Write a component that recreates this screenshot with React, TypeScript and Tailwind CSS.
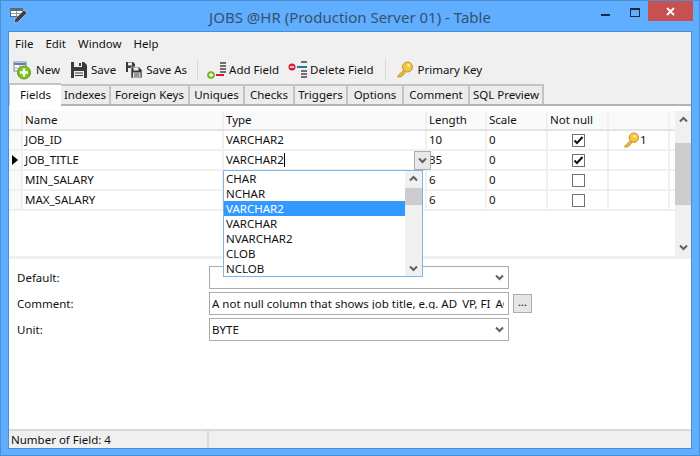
import React from 'react';

const font = { fontFamily: '"Noto Sans", "Open Sans", sans-serif' };

const tabs = [
  { label: 'Indexes', w: 'w-[50px]' },
  { label: 'Foreign Keys', w: 'w-[79px]' },
  { label: 'Uniques', w: 'w-[55px]' },
  { label: 'Checks', w: 'w-[50px]' },
  { label: 'Triggers', w: 'w-[53px]' },
  { label: 'Options', w: 'w-[56px]' },
  { label: 'Comment', w: 'w-[66px]' },
  { label: 'SQL Preview', w: 'w-[74px]' },
];

const rows = [
  { name: 'JOB_ID', type: 'VARCHAR2', length: '10', scale: '0', notNull: true, key: true },
  { name: 'JOB_TITLE', type: 'VARCHAR2', length: '35', scale: '0', notNull: true, current: true },
  { name: 'MIN_SALARY', type: '', length: '6', scale: '0', notNull: false },
  { name: 'MAX_SALARY', type: '', length: '6', scale: '0', notNull: false },
];

const types = ['CHAR', 'NCHAR', 'VARCHAR2', 'VARCHAR', 'NVARCHAR2', 'CLOB', 'NCLOB'];

function Chevron({ dir = 'down', className = '' }: { dir?: 'down' | 'up'; className?: string }) {
  return (
    <svg width="9" height="7" viewBox="0 0 9 7" className={className}>
      <path d={dir === 'down' ? 'M1 1.5l3.5 3.5L8 1.5' : 'M1 5.5L4.5 2 8 5.5'} fill="none" stroke="#606060" strokeWidth="2" />
    </svg>
  );
}

function KeyIcon({ size = 18 }: { size?: number }) {
  return (
    <svg width={size} height={size} viewBox="0 0 18 18">
      <path d="M9 8L1.5 15l1 1.5 1.5-1 1 .5 1-1.5 1 0L10 10z" fill="#f0b93a" stroke="#b98a20" strokeWidth=".8" />
      <circle cx="11.5" cy="6" r="5" fill="#f6c544" stroke="#c0902a" strokeWidth="1" />
      <circle cx="12.5" cy="4.5" r="1.4" fill="#fdf0b0" />
    </svg>
  );
}

function NewIcon() {
  return (
    <svg width="20" height="20" viewBox="0 0 20 20">
      <rect x="1" y="2" width="12" height="9" fill="#fff" stroke="#7a8aa0" />
      <path d="M1 3h12v2H1z" fill="#5b7fb5" />
      <path d="M1 8h12M7 5v6" stroke="#9aa8bb" />
      <circle cx="11" cy="12.5" r="6.5" fill="#7fc31c" stroke="#5c9a12" />
      <path d="M11 8.5v8M7 12.5h8" stroke="#fff" strokeWidth="2.4" />
    </svg>
  );
}

function SaveIcon() {
  return (
    <svg width="18" height="18" viewBox="0 0 18 18">
      <path d="M1 1h13l3 3v13H1z" fill="#3a3a3a" />
      <rect x="4" y="1" width="8" height="5" fill="#f0f0f0" />
      <rect x="9" y="2" width="2" height="3" fill="#3a3a3a" />
      <rect x="4" y="10" width="10" height="7" fill="#f0f0f0" />
      <path d="M5 12h8M5 14.5h8" stroke="#3a3a3a" />
    </svg>
  );
}

function SaveAsIcon() {
  return (
    <svg width="18" height="18" viewBox="0 0 18 18">
      <path d="M1 1h7l2 2v8H1z" fill="#3a3a3a" />
      <rect x="3" y="1.5" width="4" height="3" fill="#f0f0f0" />
      <rect x="3" y="7" width="5" height="4" fill="#f0f0f0" />
      <path d="M6 6h8l3 3v8H6z" fill="#3a3a3a" stroke="#f0f0f0" strokeWidth=".6" />
      <rect x="8.5" y="6.5" width="5" height="3" fill="#f0f0f0" />
      <rect x="8" y="11.5" width="7.5" height="5" fill="#f0f0f0" />
      <path d="M9 13h5.5M9 15h5.5" stroke="#3a3a3a" />
    </svg>
  );
}

function AddFieldIcon() {
  return (
    <svg width="19" height="18" viewBox="0 0 19 18">
      <path d="M13 1h6v2h-6zM13 4h6v2h-6zM13 7h6v2h-6zM13 10h6v2h-6z" fill="#707070" />
      <rect x="9" y="13" width="8" height="2" fill="#e0103a" />
      <circle cx="4" cy="14" r="3.5" fill="#7fc31c" stroke="#5c9a12" strokeWidth=".6" />
      <path d="M4 12v4M2 14h4" stroke="#fff" strokeWidth="1.3" />
    </svg>
  );
}

function DeleteFieldIcon() {
  return (
    <svg width="19" height="18" viewBox="0 0 19 18">
      <path d="M13 0h6v2h-6zM13 9h6v2h-6zM13 12h6v2h-6zM13 15h6v2h-6z" fill="#707070" />
      <rect x="9" y="5" width="10" height="2" fill="#1b7d9a" />
      <circle cx="4" cy="6" r="3.5" fill="#d81c38" />
      <path d="M2 6h4" stroke="#fff" strokeWidth="1.4" />
    </svg>
  );
}

function AppIcon() {
  return (
    <svg width="18" height="18" viewBox="0 0 18 18">
      <rect x="0.5" y="1.5" width="12" height="8" fill="#fff" stroke="#5a6a7a" />
      <path d="M0 2h13v2H0z" fill="#5a6a7a" />
      <path d="M1 6.5h11M6.5 4v5" stroke="#8a98a8" />
      <path d="M4 16l1-4 9-9 3 3-9 9z" fill="#3c4650" stroke="#dfe8f0" strokeWidth=".5" />
    </svg>
  );
}

function ToolButton({ icon, label, className = '' }: { icon: React.ReactNode; label: string; className?: string }) {
  return (
    <div className={`flex items-center gap-[3px] ${className}`}>
      {icon}
      <span>{label}</span>
    </div>
  );
}

function Checkbox({ checked }: { checked: boolean }) {
  return (
    <div className="flex h-[13px] w-[13px] items-center justify-center border border-[#707070] bg-white">
      {checked && (
        <svg width="11" height="11" viewBox="0 0 11 11">
          <path d="M1.5 5.5l2.5 2.5 5.5-6" fill="none" stroke="#111" strokeWidth="2" />
        </svg>
      )}
    </div>
  );
}

const cell = 'flex h-full items-center border-r-2 border-[#f0f0f0] pl-[2px] shrink-0';

function Row({ row }: { row: (typeof rows)[number] }) {
  return (
    <div className="flex h-[20px] items-center border-b-2 border-[#f0f0f0]">
      <div className="flex h-full w-[14px] shrink-0 items-center justify-center border-r-2 border-[#f0f0f0] bg-[#fafafa]">
        {row.current && <div className="h-0 w-0 border-y-[5px] border-l-[6px] border-y-transparent border-l-black" />}
      </div>
      <div className={`${cell} w-[201px] pl-[1px]`}>{row.name}</div>
      <div className={`${cell} w-[203px]`}>
        {row.current ? (
          <div className="flex items-center">
            {row.type}
            <div className="h-[14px] w-px bg-black" />
          </div>
        ) : (
          row.type
        )}
      </div>
      <div className={`${cell} w-[60px] pl-[1px]`}>{row.length}</div>
      <div className={`${cell} w-[61px]`}>{row.scale}</div>
      <div className={`${cell} w-[61px] justify-center`}>
        <Checkbox checked={row.notNull} />
      </div>
      <div className={`${cell} w-[61px] pl-[14px]`}>
        {row.key && (
          <>
            <KeyIcon size={17} />
            <span>1</span>
          </>
        )}
      </div>
    </div>
  );
}

function FormRow({ label, children, after }: { label: string; children: React.ReactNode; after?: React.ReactNode }) {
  return (
    <div className="flex h-[23px] items-center">
      <div className="w-[200px] shrink-0 pl-2">{label}</div>
      <div className="flex h-full w-[300px] shrink-0 items-center justify-between overflow-hidden border border-[#ababab] bg-white pl-[2px] pr-1 whitespace-nowrap">
        {children}
      </div>
      {after}
    </div>
  );
}

export default function App() {
  return (
    <div style={font} className="flex h-[456px] w-[700px] flex-col overflow-hidden border border-[#4a90d0] bg-[#60aeff] text-[11.5px] leading-none text-[#111]">
      <div className="relative flex h-[30px] shrink-0 items-center justify-center">
        <div className="absolute left-[9px] top-[6px]">
          <AppIcon />
        </div>
        <span className="pt-[2px] text-[15px] text-[#35526b]">JOBS @HR (Production Server 01) - Table</span>
        <div className="absolute right-[6px] top-0 flex items-start">
          <div className="mt-[13px] mr-[20px] h-[2px] w-[9px] bg-[#1a2a3a]" />
          <div className="mt-[7px] mr-[8px] h-[9px] w-[10px] border border-t-2 border-[#1a2a3a]" />
          <div className="flex h-[20px] w-[45px] items-center justify-center bg-[#c75050]">
            <svg width="9" height="9" viewBox="0 0 9 9">
              <path d="M1 1l7 7M8 1l-7 7" stroke="#fff" strokeWidth="1.8" />
            </svg>
          </div>
        </div>
      </div>

      <div className="mx-[7px] flex min-h-0 flex-1 flex-col border border-b-0 border-[#4a90d0] bg-white">
        <div className="bg-[#f0f0f0]">
          <div className="flex h-[24px] items-center gap-[12px] pl-[6px] text-[#111]">
            <span>File</span>
            <span>Edit</span>
            <span>Window</span>
            <span>Help</span>
          </div>
          <div className="flex h-[28px] items-center pl-[4px]">
            <ToolButton icon={<NewIcon />} label="New" className="mr-[10px] gap-[1px]" />
            <ToolButton icon={<SaveIcon />} label="Save" className="mr-[9px]" />
            <ToolButton icon={<SaveAsIcon />} label="Save As" className="mr-[10px]" />
            <div className="mr-[9px] h-[22px] w-px bg-[#d8d8d8]" />
            <ToolButton icon={<AddFieldIcon />} label="Add Field" className="mr-[9px] gap-[2px]" />
            <ToolButton icon={<DeleteFieldIcon />} label="Delete Field" className="mr-[12px] gap-[2px]" />
            <div className="mr-[10px] h-[22px] w-px bg-[#d8d8d8]" />
            <ToolButton icon={<KeyIcon />} label="Primary Key" className="gap-[1px]" />
          </div>
          <div className="flex h-[22px] items-end border-b-2 border-[#b4b4b4] pr-[2px]">
            <div className="-mb-[2px] flex h-[23px] w-[52px] items-center justify-center border-t-2 border-l border-[#c4c4c4] bg-white pb-[2px]">Fields</div>
            {tabs.map(tab => (
              <div key={tab.label} className={`flex h-[20px] ${tab.w} shrink-0 items-center justify-center border-2 border-b-0 border-l-0 border-[#c4c4c4] bg-[#ececec] whitespace-nowrap`}>
                {tab.label}
              </div>
            ))}
          </div>
        </div>

        <div className="relative mt-[5px] flex h-[148px] shrink-0 flex-col">
          <div className="flex min-h-0 flex-1">
            <div className="min-w-0 flex-1">
              <div className="flex h-[20px] items-center border-b-2 border-[#e4e4e4] bg-[#fafafa]">
                <div className="h-full w-[14px] shrink-0 border-r-2 border-[#f0f0f0]" />
                <div className={`${cell} w-[201px] pl-[1px]`}>Name</div>
                <div className={`${cell} w-[203px]`}>Type</div>
                <div className={`${cell} w-[60px] pl-[1px]`}>Length</div>
                <div className={`${cell} w-[61px]`}>Scale</div>
                <div className={`${cell} w-[61px]`}>Not null</div>
                <div className={`${cell} w-[61px]`} />
              </div>
              {rows.map(row => (
                <Row key={row.name} row={row} />
              ))}
            </div>
            <div className="flex w-[16px] shrink-0 flex-col items-center justify-between bg-[#f0f0f0] py-[5px]">
              <Chevron dir="up" />
              <div className="absolute top-[32px] h-[62px] w-[16px] bg-[#cdcdcd]" />
              <Chevron />
            </div>
          </div>
          <div className="h-[3px] shrink-0 bg-[#f0f0f0]" />

          <div className="absolute left-[405px] top-[40px] flex h-[19px] w-[17px] items-center justify-center border border-[#acacac] bg-[#e8e8e8]">
            <Chevron />
          </div>
          <div className="absolute left-[214px] top-[59px] z-10 flex h-[107px] w-[200px] border border-[#7eb4ea] bg-white">
            <div className="min-w-0 flex-1">
              {types.map(t => (
                <div key={t} className={`flex h-[15px] items-center pl-[2px] ${t === 'VARCHAR2' ? 'bg-[#3399ff] text-white' : ''}`}>
                  {t}
                </div>
              ))}
            </div>
            <div className="relative flex w-[17px] shrink-0 flex-col items-center justify-between bg-[#f0f0f0] py-[4px]">
              <Chevron dir="up" />
              <div className="absolute top-[17px] h-[17px] w-full bg-[#cdcdcd]" />
              <Chevron />
            </div>
          </div>
        </div>

        <div className="flex min-h-0 flex-1 flex-col gap-[3px] pt-[7px]">
          <FormRow label="Default:">
            <span />
            <Chevron />
          </FormRow>
          <FormRow
            label="Comment:"
            after={
              <div className="ml-[4px] flex h-[19px] w-[19px] items-center justify-center border border-[#acacac] bg-[#e6e6e6] pb-[3px]">...</div>
            }
          >
            <span className="overflow-hidden">A not null column that shows job title, e.g. AD_VP, FI_ACCOUNT</span>
          </FormRow>
          <FormRow label="Unit:">
            <span>BYTE</span>
            <Chevron />
          </FormRow>
        </div>

        <div className="flex h-[19px] shrink-0 items-center border-t-2 border-[#d9d9d9] bg-[#f0f0f0]">
          <div className="flex h-full w-[200px] items-center border-r-2 border-[#d9d9d9] pl-[2px]">Number of Field: 4</div>
        </div>
      </div>
      <div className="mx-[7px] h-px shrink-0 bg-[#4a90d0]" />
      <div className="h-[6px] shrink-0" />
    </div>
  );
}
